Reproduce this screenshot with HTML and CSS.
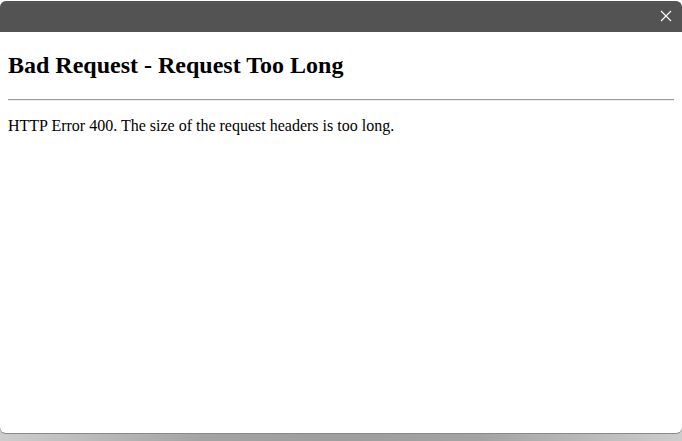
FILE: index.html
```html
<!DOCTYPE html>
<html>
<head>
<meta charset="utf-8">
<link rel="stylesheet" href="styles.css">
</head>
<body>
<div class="window">
  <div class="titlebar">
    <svg class="close" width="12" height="12" viewBox="0 0 12 12"><path d="M1 1 L11 11 M11 1 L1 11" stroke="#ffffff" stroke-width="1.2" fill="none"/></svg>
  </div>
  <div class="content">
    <h2 class="title">Bad Request - Request Too Long</h2>
    <hr class="rule">
    <p class="msg">HTTP Error 400. The size of the request headers is too long.</p>
  </div>
</div>
</body>
</html>
```
FILE: styles.css
```css
html, body {
  margin: 0;
  padding: 0;
  width: 682px;
  height: 441px;
  overflow: hidden;
}
body {
  background:
    linear-gradient(to right, #cdcdcd 0%, #a3a3a3 30%, #9e9e9e 50%, #a3a3a3 70%, #cdcdcd 100%) left bottom / 100% 12px no-repeat,
    #ffffff;
}
.window {
  margin-top: 1px;
  height: 432px;
  border-radius: 6px;
  background: #ffffff;
  box-shadow: 0 1px 0 #8a8a8a;
  overflow: hidden;
  display: flex;
  flex-direction: column;
}
.titlebar {
  height: 31px;
  flex: none;
  background: #535353;
  display: flex;
  justify-content: flex-end;
  align-items: flex-start;
}
.close {
  margin: 9px 10px 0 0;
}
.content {
  flex: 1;
  padding: 0.1px 8px 0;
  font-family: "Liberation Serif", "Times New Roman", serif;
  color: #000;
}
.title {
  font-size: 24px;
  font-weight: bold;
  margin: 19.9px 0;
}
.rule {
  margin: 8px 0;
  border: none;
  border-top: 1px solid #9a9a9a;
  border-bottom: 1px solid #eeeeee;
}
.msg {
  font-size: 16px;
  margin: 16px 0;
}
```
